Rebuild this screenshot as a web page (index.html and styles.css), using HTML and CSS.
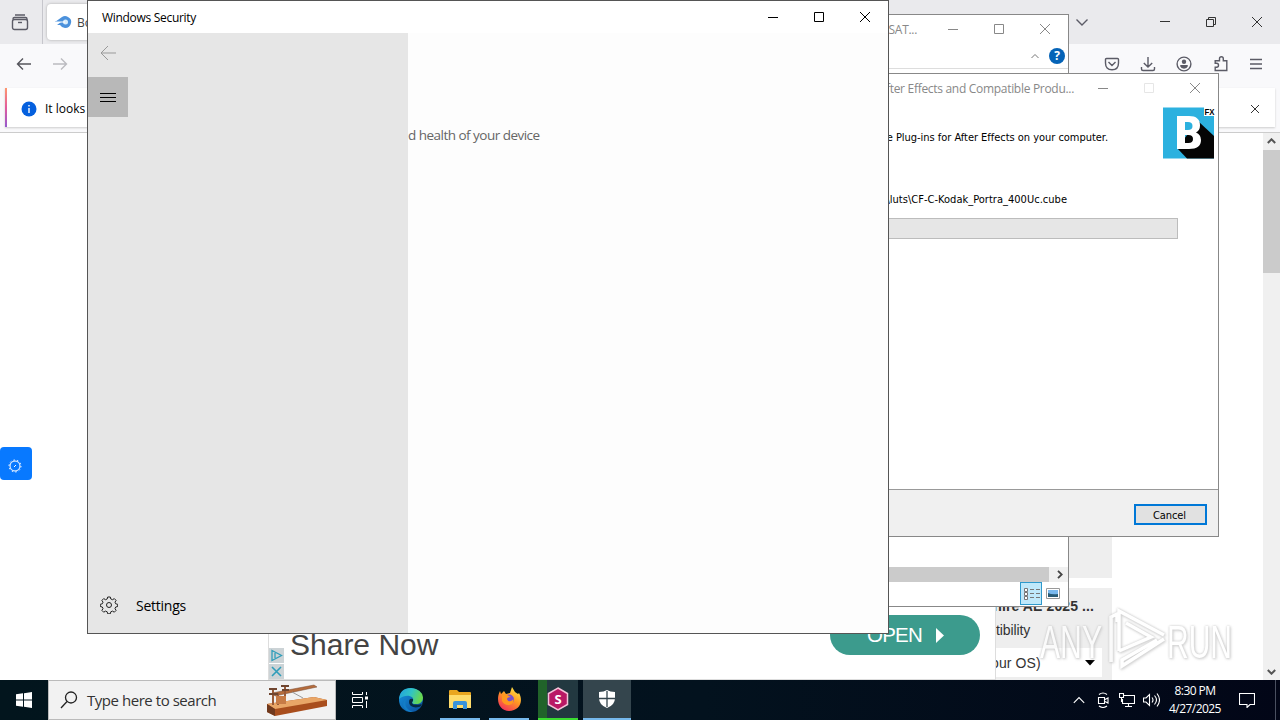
FILE: index.html
```html
<!DOCTYPE html>
<html lang="en">
<head>
<meta charset="utf-8">
<title>Desktop</title>
<link rel="stylesheet" href="styles.css">
</head>
<body>
<div class="desktop">

<section class="browser">
  <div class="tabstrip">
    <div class="tabview"><svg width="18" height="17" viewBox="0 0 18 17" class="line"><path d="M4 1h10M2 5.500V5q0-1.500 1.500-1.500h11q1.500 0 1.500 1.500V6"/><rect x="1.500" y="5.500" width="15" height="10" rx="2"/><path d="M7 8.500h4"/></svg></div>
    <div class="tab"><svg width="17" height="12" viewBox="0 0 17 12"><path d="M0 6L7 1Q10-1 13 1Q17 3 16 7Q15 12 10 12Q7 12 5 9L2 9L6 6Z" fill="#4b91dc"/><circle cx="10.500" cy="6" r="2.500" fill="#d8ecfb"/><path d="M1 6h9" stroke="#fff"/></svg><span>Boris</span></div>
    <div class="browser-controls">
      <svg width="14" height="9" viewBox="0 0 14 9" class="line"><path d="M1.500 1.500L7 7L12.500 1.500"/></svg>
      <svg width="12" height="12" viewBox="0 0 12 12" class="thin"><path d="M1 5.500h10"/></svg>
      <svg width="12" height="12" viewBox="0 0 12 12" class="thin"><path d="M1.500 3.500h7v7h-7zM3.500 3V1.500h7v7H9"/></svg>
      <svg width="12" height="12" viewBox="0 0 12 12" class="thin"><path d="M1 1l10 10M11 1L1 11"/></svg>
    </div>
  </div>
  <div class="toolbar">
    <svg width="16" height="14" viewBox="0 0 16 14" class="line dark"><path d="M15 7H1.500M7 1.500L1.500 7L7 12.500"/></svg>
    <svg width="16" height="14" viewBox="0 0 16 14" class="line faded"><path d="M1 7h13.500M9 1.500L14.500 7L9 12.500"/></svg>
    <div class="tools">
      <svg width="16" height="14" viewBox="0 0 16 14" class="line"><path d="M2.500 1.500h11q1 0 1 1V6Q14.500 12.800 8 12.800T1.500 6V2.500q0-1 1-1zM4.500 5L8 8.500L11.500 5"/></svg>
      <svg width="16" height="16" viewBox="0 0 16 16" class="line"><path d="M8 1v10M3.800 7L8 11L12.200 7M1.500 11v2q0 1.500 1.500 1.500h10q1.500 0 1.500-1.500v-2"/></svg>
      <svg width="16" height="16" viewBox="0 0 16 16" class="line"><circle cx="8" cy="8" r="6.900"/><circle cx="8" cy="5.800" r="2.200" fill="#5b5b66" stroke="none"/><path d="M4 10q0-1 1-1h6q1 0 1 1q-1.200 2.800-4 2.800T4 10z" fill="#5b5b66" stroke="none"/></svg>
      <svg width="16" height="16" viewBox="0 0 16 16" class="line"><path d="M2.200 7.300V4.800h4.300V2.800q0-2 1.900-2t1.900 2V4.800h3.500v9.700H2.200V11.200h1.400q1.900 0 1.900-1.950T3.600 7.300z" /></svg>
      <svg width="14" height="12" viewBox="0 0 14 12" class="line"><path d="M1 1.500h12M1 6h12M1 10.500h12"/></svg>
    </div>
  </div>
  <div class="notice-row">
    <div class="notice">
      <svg width="16" height="16" viewBox="0 0 16 16"><circle cx="8" cy="8" r="7.500" fill="#0560de"/><path d="M8 7v5M8 4v1.500" stroke="#fff" stroke-width="1.400"/></svg>
      <span>It looks like</span>
      <svg width="10" height="10" viewBox="0 0 10 10" class="thin notice-x"><path d="M1 1l8 8M9 1L1 9"/></svg>
    </div>
  </div>
  <div class="page">
    <div class="page-left"><div class="widget"><svg width="14" height="14" viewBox="0 0 14 14"><circle cx="7" cy="7" r="5" fill="none" stroke="#fff" stroke-width="1"/><circle cx="7" cy="7" r="6" fill="none" stroke="#fff" stroke-width="1" stroke-dasharray="1.500 2.200"/><path d="M6 8l2-2" stroke="#fff"/></svg></div></div>
    <div class="ad">
      <div class="ad-marks">
        <svg width="15" height="15" viewBox="0 0 15 15"><path d="M3 2.500v10L12.500 7.500zM6 5v5" fill="none" stroke="#2f9dba" stroke-width="1.300"/></svg>
        <svg width="15" height="15" viewBox="0 0 15 15"><path d="M3 3l9 9M12 3l-9 9" stroke="#2f9dba" stroke-width="1.600"/></svg>
      </div>
      <div class="share">Share Now</div>
      <div class="open"><span>OPEN</span><svg width="8" height="15" viewBox="0 0 8 15"><path d="M0 0L8 7.500L0 15z" fill="#fff"/></svg></div>
    </div>
    <div class="sidebar">
      <div class="side-top"></div>
      <div class="side-card"><b>hire AE 2025 ...</b><span>tibility</span><div class="select"><span>our OS)</span><svg width="10" height="6" viewBox="0 0 10 6"><path d="M0 0h10L5 5.500z"/></svg></div></div>
    </div>
    <div class="scrollbar">
      <svg width="9" height="6" viewBox="0 0 9 6"><path d="M.8 5L4.500 1.300L8.200 5"/></svg>
      <div class="thumb"></div>
      <svg width="9" height="6" viewBox="0 0 9 6"><path d="M.8 1L4.500 4.700L8.200 1"/></svg>
    </div>
  </div>
</section>

<section class="window explorer">
  <div class="titlebar"><span class="title">SAT...</span>
    <div class="controls">
      <svg width="12" height="12" viewBox="0 0 12 12"><path d="M1 6.500h10"/></svg>
      <svg width="12" height="12" viewBox="0 0 12 12"><path d="M1.500 1.500h9v9h-9z"/></svg>
      <svg width="12" height="12" viewBox="0 0 12 12"><path d="M1 1l10 10M11 1L1 11"/></svg>
    </div>
  </div>
  <div class="ribbon"><svg width="8" height="6" viewBox="0 0 8 6" fill="none" stroke="#777"><path d="M.5 5L4 1.500L7.500 5"/></svg><i>?</i></div>
  <div class="files"></div>
  <div class="hscroll"><div class="hthumb"></div><svg width="6" height="9" viewBox="0 0 6 9"><path d="M1 .8L4.700 4.500L1 8.200" fill="none" stroke="#444" stroke-width="1.800"/></svg></div>
  <div class="status">
    <div class="details"><svg width="18" height="14" viewBox="0 0 18 14" fill="none" stroke="#777"><path d="M2.500 1.500h3v3h-3zM2.500 5.500h3v3h-3zM2.500 9.500h3v3h-3z" fill="#fff"/><path d="M8 2.500h4M14 2.500h4M8 6.500h4M14 6.500h4M8 10.500h4M14 10.500h4"/></svg></div>
    <svg width="14" height="11" viewBox="0 0 14 11"><path d="M.5.5h13v10H.5z" fill="#fff" stroke="#999"/><path d="M2 2h10v7H2z" fill="#79b8ed"/><path d="M2 5q4 2 10 1v3H2z" fill="#285b76"/></svg>
  </div>
</section>

<section class="window installer">
  <div class="titlebar"><span class="title">After Effects and Compatible Produ...</span>
    <div class="controls">
      <svg width="12" height="12" viewBox="0 0 12 12"><path d="M1 6.500h10"/></svg>
      <svg width="12" height="12" viewBox="0 0 12 12" class="disabled"><path d="M1.500 1.500h9v9h-9z"/></svg>
      <svg width="12" height="12" viewBox="0 0 12 12"><path d="M1 1l10 10M11 1L1 11"/></svg>
    </div>
  </div>
  <div class="install-head">
    <p>the Plug-ins for After Effects on your computer.</p>
    <svg width="52" height="52" viewBox="0 0 52 52"><path d="M0 0.500h51v51H0z" fill="#2cb1df"/><path d="M35 14L51 29V51.500H24L14 41z" fill="#050505"/><path d="M41 0h11v9H41z" fill="#fff"/><text x="41.500" y="7.500" textLength="10" lengthAdjust="spacingAndGlyphs" class="fx">FX</text><path fill-rule="evenodd" d="M14 9h12q11 0 11 9.500q0 5-4 7q5 2 5 7.500q0 9-12 9H14zM22 15v8h3q4.500 0 4.500-4t-4.500-4zM22 28v8h3.500q4.500 0 4.500-4t-4.500-4z" fill="#fff"/></svg>
  </div>
  <div class="install-body"><p>\luts\CF-C-Kodak_Portra_400Uc.cube</p><div class="progress"></div></div>
  <div class="install-foot"><button class="cancel">Cancel</button></div>
</section>

<section class="window security">
  <div class="titlebar"><span class="title">Windows Security</span>
    <div class="controls">
      <svg width="12" height="12" viewBox="0 0 12 12"><path d="M1 6.500h10"/></svg>
      <svg width="12" height="12" viewBox="0 0 12 12"><path d="M1.500 1.500h9v9h-9z"/></svg>
      <svg width="12" height="12" viewBox="0 0 12 12"><path d="M1 1l10 10M11 1L1 11"/></svg>
    </div>
  </div>
  <div class="security-main">
    <nav>
      <div class="back"><svg width="16" height="14" viewBox="0 0 16 14" fill="none" stroke="#999"><path d="M16 7H1M8 0L1 7l7 7"/></svg></div>
      <div class="menu"><svg width="16" height="10" viewBox="0 0 16 10" stroke="#000"><path d="M0 .5h16M0 4.500h16M0 8.500h16"/></svg></div>
      <div class="settings"><svg width="18" height="18" viewBox="-9 -9 18 18" fill="none" stroke="#222"><path d="M-1.300-8h2.600l.5 2 1.800.7 1.700-1.100 1.800 1.800-1.100 1.800.7 1.600 2 .5v2.200l-2 .5-.7 1.600 1.100 1.800-1.800 1.800-1.800-1.100-1.700.7-.5 2h-2.600l-.5-2-1.700-.7-1.800 1.100-1.800-1.800 1.100-1.800-.7-1.600-2-.5v-2.200l2-.5.7-1.600-1.100-1.800 1.800-1.800 1.800 1.100 1.700-.7z"/><circle r="2.500"/></svg><span>Settings</span></div>
    </nav>
    <p>d health of your device</p>
  </div>
</section>

<svg class="watermark" width="210" height="66" viewBox="0 0 210 66">
  <text x="5" y="52" textLength="62" lengthAdjust="spacingAndGlyphs">ANY</text>
  <path d="M76 56V11L82 8V16M84 45V5L129 29M84 45L116 31L91 17M129 33L87 60V54L122 34"/>
  <text x="132" y="52" textLength="65" lengthAdjust="spacingAndGlyphs">RUN</text>
</svg>

<footer class="taskbar">
  <div class="task start"><svg width="16" height="16" viewBox="0 0 16 16"><path d="M0 2.300L7 1.300V7.500H0zM8 1.200L16 0V7.500H8zM0 8.500H7v6.200L0 13.700zM8 8.500h8V16L8 14.800z" fill="#fff"/></svg></div>
  <div class="search">
    <svg width="18" height="18" viewBox="0 0 18 18" fill="none" stroke="#222" stroke-width="1.300"><circle cx="11" cy="6.500" r="5.500"/><path d="M7 10.500L1 17"/></svg>
    <span>Type here to search</span>
    <svg class="telegraph" width="62" height="34" viewBox="0 0 62 34"><path d="M1 21L48 14l13 3v6L9 33l-8-4z" fill="#a94e1d"/><path d="M1 21L48 14l13 3L9 26z" fill="#e9a667"/><path d="M1 21l8 5v7l-8-4z" fill="#70391d"/><path d="M6 10l42-8 3 2-42 9z" fill="#b56c3c" stroke="#75462e" stroke-width=".5"/><path d="M7 7v15M12 10v12M19 3v17" stroke="#9a5a38" stroke-width="2" fill="none"/><path d="M3 6h8M15 3h8M3 11h9M16 7h7" stroke="#704630" stroke-width="2"/><path d="M10 13h10v8H10z" fill="#c77b46"/><path d="M26 9l11 6" stroke="#999"/></svg>
  </div>
  <div class="task view"><svg width="18" height="16" viewBox="0 0 18 16" fill="none" stroke="#fff"><path d="M1.500 0v2.500h10V0M1.500 5.500h10v5h-10zM1.500 16v-2.500h10V16M15.500 0v3M15.500 9v7"/><path d="M14 4.500h3v3h-3z" fill="#fff" stroke="none"/></svg></div>
  <div class="task edge"><svg width="24" height="24" viewBox="0 0 24 24"><defs><linearGradient id="eg" x2="1" y2=".3"><stop stop-color="#209fe0"/><stop offset=".55" stop-color="#31c4c4"/><stop offset="1" stop-color="#68d850"/></linearGradient><linearGradient id="eb" x2="1" y2="1"><stop stop-color="#1695df"/><stop offset="1" stop-color="#0a4c9a"/></linearGradient></defs><circle cx="12" cy="12" r="12" fill="url(#eb)"/><path d="M0 11Q1 0 12 0q11 1 12 9.500c0 5-4 7-8 6.500-3 0-3-2-2-3 2-5-7-8-14-2z" fill="url(#eg)"/><path d="M8 11c-4 5 0 12 7 13-6 1-11-3-11-8 0-3 2-5 4-5z" fill="#137dc6"/><path d="M14 11q-4-1-4 3c0 5 7 7 12 4l2-4v3l-1-1q-3 1-7 .5c-3 0-4-2-2-3.500z" fill="#062b44"/></svg></div>
  <div class="task files-icon active"><svg width="22" height="19" viewBox="0 0 22 19"><path d="M0 1q0-1 1-1h7l2 2h11q1 0 1 1v14H0z" fill="#e9a620"/><path d="M0 5h22v13H0z" fill="#ffdc6b"/><path d="M4 19v-6q0-2 2-2h10q2 0 2 2v6h-4v-4H8v4z" fill="#3993db"/></svg></div>
  <div class="task firefox active"><svg width="24" height="24" viewBox="0 0 24 24"><defs><linearGradient id="ff" x1=".8" y1="0" x2=".2" y2="1"><stop stop-color="#ffe84a"/><stop offset=".45" stop-color="#ff9923"/><stop offset="1" stop-color="#f32b5d"/></linearGradient></defs><path d="M3 4l1 3 3-3 2 3 4-1 2-6 3 5 3 2 1-1c5 9 0 18-10 18C3 24-2 14 3 4z" fill="url(#ff)"/><circle cx="12" cy="12.500" r="5" fill="#7650cf"/><path d="M5 8c4-2 6 1 9 2-2 0-4 1-4 2 1 4 6 2 6 0 3 6-8 9-11 2z" fill="#ff981f"/></svg></div>
  <div class="task setup"><svg width="22" height="24" viewBox="0 0 22 24"><path d="M11 1l9.500 5.500v11L11 23l-9.500-5.500v-11z" fill="#b91865" stroke="#f5c2d8" stroke-width="1.500"/><text x="11" y="16.500" text-anchor="middle" class="s-mark">S</text></svg></div>
  <div class="task shield active"><svg width="18" height="18" viewBox="0 0 18 18"><path d="M9 0q3 2 8 2v6q0 7-8 10Q1 15 1 8V2q5 0 8-2z" fill="#fff"/><path d="M9 1v16M1 8.500h16" stroke="#34454d" stroke-width="1.300"/></svg></div>
  <div class="tray">
    <svg width="12" height="8" viewBox="0 0 12 8"><path d="M.8 6.800L6 1.500l5.200 5.300"/></svg>
    <svg width="12" height="16" viewBox="0 0 12 16"><path d="M1.500 5.500h6v6h-6zM8 7.500l3-1.500v5l-3-1.500M2 2.500q4-3 8 0M2 14q4 3 8 0"/></svg>
    <svg width="16" height="14" viewBox="0 0 16 14"><path d="M4.500 2.500h11v8H3.500V6M9.500 11v2.500M6 13.500h7M.5.500h4v4h-4zM2.500 5v4"/></svg>
    <svg width="17" height="14" viewBox="0 0 17 14"><path d="M.5 5h2.500l3.500-3.500v11L3 9H.5zM9 4.500q2 2.500 0 5M11.500 2.500q4 4.500 0 9M14 .5q5 6.500 0 13"/></svg>
    <div class="clock"><span>8:30 PM</span><span>4/27/2025</span></div>
    <svg width="16" height="16" viewBox="0 0 16 16"><path d="M.5 1.500h15v11H11L8 15.500V12.500H.5z"/></svg>
    <div class="show-desktop"></div>
  </div>
</footer>
</div>
</body>
</html>
```
FILE: styles.css
```css
* { box-sizing: border-box; }
body { margin: 0; overflow: hidden; font: 12px "Open Sans", "Noto Sans", sans-serif; }
p { margin: 0; }
svg { display: block; flex: none; }
.desktop { position: relative; width: 1280px; height: 720px; overflow: hidden; }
.line { fill: none; stroke: #5b5b66; stroke-width: 1.4; }
.line.dark { stroke: #55555c; }
.line.faded { stroke: #bbbbc0; }
.thin { fill: none; stroke: #333; stroke-width: 1; }
.browser { height: 680px; display: flex; flex-direction: column; background: #fff; }
.tabstrip { display: flex; height: 44px; background: #eaeaed; }
.tabview { width: 43px; border-right: 1px solid #c6c6cc; padding: 14px 11px; }
.tab { display: flex; align-items: center; gap: 5px; width: 240px; height: 36px; margin: 4px 0 0 4px; padding: 0 8px; border-radius: 4px; background: #fff; box-shadow: 0 0 3px #aaa; color: #444; }
.browser-controls { display: flex; align-items: center; margin-left: auto; padding-right: 17px; }
.browser-controls svg + svg { margin-left: 34px; }
.browser-controls svg:nth-child(2) { margin-left: 70px; }
.toolbar { display: flex; align-items: center; height: 44px; gap: 20px; padding: 0 17px 4px 16px; background: #f9f9fb; }
.tools { display: flex; align-items: center; gap: 20px; margin-left: auto; }
.tools svg:nth-child(-n+3) { margin-left: -1px; margin-right: 1px; }
.notice-row { height: 45px; padding: 0 5px 5px; background: #f9f9fb; border-bottom: 1px solid #ccc; }
.notice { height: 39px; display: flex; align-items: center; gap: 8px; padding: 2px 15px 0 14px; background: #fff; border-left: 2px solid; border-image: linear-gradient(#ff9a6c, #e25b9d, #9059d0) 1; box-shadow: 0 1px 2px #ccc; }
.notice-x { margin-left: auto; }
.page { display: flex; flex: 1; }
.page-left { width: 268px; padding-top: 314px; }
.widget { width: 32px; height: 33px; padding: 12px 8px; border-radius: 4px; background: #0879ff; }
.ad { width: 728px; display: flex; align-items: flex-end; border: solid #ddd; border-width: 0 1px 1px; }
.ad-marks { display: grid; gap: 1px; }
.ad-marks svg { background: #ccd3d6; }
.share { margin-left: 6px; padding-bottom: 17px; font: 30px/34px "Liberation Sans", sans-serif; color: #444; width: 540px; }
.open { display: flex; align-items: center; width: 150px; height: 40px; margin-bottom: 24px; padding-left: 37px; gap: 13px; border-radius: 20px; background: #3c9b8d; color: #fff; font: 20.5px "Liberation Sans", sans-serif; }
.open span { width: 56px; white-space: nowrap; letter-spacing: -.8px; }
.sidebar { width: 116px; display: flex; flex-direction: column; overflow: hidden; }
.side-top { height: 445px; background: #eee; }
.side-card { flex: 1; margin-top: 10px; display: flex; flex-direction: column; padding: 9px 10px 3px 0; background: #eee; font: 14px/19px "Liberation Sans", sans-serif; color: #333; align-items: flex-end; }
.side-card b { white-space: nowrap; margin-right: 8px; letter-spacing: .1px; }
.side-card > span { align-self: flex-start; margin: 5px 0 8px 0; letter-spacing: -.1px; }
.select { flex: 1; width: 107px; display: flex; align-items: center; justify-content: space-between; background: #fff; padding: 1px 7px 0 0; }
.select span { margin-left: -4px; white-space: nowrap; letter-spacing: .1px; }
.scrollbar { width: 17px; margin-left: auto; background: #f0f0f0; display: flex; flex-direction: column; align-items: center; padding: 5px 0; }
.scrollbar svg { fill: none; stroke: #555; stroke-width: 2; }
.thumb { width: 17px; height: 123px; margin: 6px 0 auto; background: #cbcbcb; }
.window { position: absolute; display: flex; flex-direction: column; background: #fff; border: 1px solid #888; }
.titlebar { display: flex; align-items: center; height: 30px; flex: none; white-space: nowrap; }
.title { font-size: 12px; letter-spacing: -.3px; }
.controls { display: flex; gap: 34px; margin-left: auto; padding-right: 17px; fill: none; stroke: #000; }
.explorer { left: 600px; top: 14px; width: 469px; height: 593px; color: #888; }
.explorer .titlebar, .installer .titlebar { padding-bottom: 2px; }
.explorer .title, .installer .title { flex: 1; text-align: right; margin-right: 30px; }
.installer .title { margin-right: 23px; }
.explorer .controls, .installer .controls { stroke: #888; }
.ribbon { display: flex; align-items: center; justify-content: flex-end; gap: 10px; height: 24px; padding: 0 3px 2px 0; border-bottom: 1px solid #ddd; }
.ribbon i { width: 16px; height: 16px; border-radius: 50%; background: #0563b7; color: #fff; font: bold 12px/16px "Open Sans", sans-serif; text-align: center; }
.files { flex: 1; }
.hscroll { display: flex; align-items: center; height: 15px; background: #f0f0f0; }
.hthumb { width: 448px; height: 15px; margin-right: 8px; background: #cbcbcb; }
.status { display: flex; height: 24px; align-items: center; justify-content: flex-end; gap: 4px; padding: 0 8px 2px 0; }
.details { width: 22px; height: 23px; padding: 4px 2px; border: 1px solid #2e99cc; background: #bfe8fa; margin-top: 1px; }
.details svg { margin-left: -1px; }
.installer { left: 700px; top: 73px; width: 519px; height: 464px; color: #888; }
.installer .disabled { opacity: .2; }
.install-head { display: flex; justify-content: space-between; height: 56px; padding: 3px 3px 0 0; color: #000; }
.install-head p { width: 407px; text-align: right; margin-top: 24px; }
.installer p { font: 11px/14px "DejaVu Sans Condensed", "DejaVu Sans", sans-serif; font-stretch: condensed; letter-spacing: -.03px; white-space: nowrap; }
.fx { font: bold 9px "Liberation Sans", sans-serif; }
.install-body { flex: 1; color: #000; padding-top: 33px; }
.install-body p { width: 366px; text-align: right; letter-spacing: .02px; }
.progress { width: 477px; height: 21px; margin-top: 11px; background: #e6e6e6; border: 1px solid #bcbcbc; }
.install-foot { height: 47px; padding: 14px 11px; background: #f0f0f0; border-top: 1px solid #999; display: flex; justify-content: flex-end; }
.cancel { width: 73px; height: 21px; padding: 2px 2px 0 0; border: 2px solid #0078d7; background: #e1e1e1; font: 11px/14px "DejaVu Sans Condensed", "DejaVu Sans", sans-serif; letter-spacing: -.1px; }
.security { left: 87px; top: 0; width: 802px; height: 634px; border-color: #555; background: #fdfdfd; }
.security .titlebar { height: 32px; background: #fff; padding-left: 14px; }
.security-main { display: flex; flex: 1; }
nav { display: flex; flex-direction: column; width: 320px; background: #e6e6e6; }
.back { height: 44px; padding: 13px 12px; }
.menu { width: 40px; height: 40px; padding: 16px 12px; background: #b8b8b8; }
.settings { display: flex; align-items: center; height: 42px; margin-top: auto; margin-bottom: 7px; gap: 18px; padding-left: 12px; font-size: 14px; letter-spacing: -.25px; }
.security-main p { margin-top: 92px; font-size: 13.5px; line-height: 20px; letter-spacing: -.52px; color: #666; }
.watermark { position: absolute; left: 1035px; top: 606px; fill: #fff; filter: drop-shadow(0 0 1px #bbb) drop-shadow(1px 1px 1px #ccc); opacity: .75; }
.watermark text { font: 46px "Liberation Sans", sans-serif; }
.watermark path { fill: none; stroke: #fff; stroke-width: 3.5; }
.taskbar { display: flex; height: 40px; background: linear-gradient(90deg, #02151d, #03121e 55%, #020617); }
.task { display: flex; align-items: center; justify-content: center; height: 40px; }
.start { width: 48px; }
.search { display: flex; align-items: center; width: 288px; background: #f2f2f2; border: 1px solid #bbb; padding: 0 7px 0 11px; color: #333; font-size: 15px; }
.search span { margin-left: 9px; white-space: nowrap; letter-spacing: -.46px; }
.telegraph { margin-left: auto; }
.view { width: 48px; }
.edge { width: 54px; }
.files-icon { width: 40px; margin: 0 9px 0 2px; }
.firefox { width: 40px; margin-right: 9px; }
.active { border-bottom: 2px solid #76b9ed; }
.setup { width: 40px; background: linear-gradient(90deg, #21632a 9px, #223840 9px); border-bottom: 2px solid #3bdc31; }
.s-mark { fill: #fff; font: bold 13px "Open Sans", sans-serif; }
.shield { width: 48px; margin-left: 5px; background: #34454d; }
.tray { display: flex; align-items: center; margin-left: auto; color: #fff; }
.tray svg { fill: none; stroke: #fff; stroke-width: 1.1; }
.tray > svg + svg { margin-left: 12px; }
.tray > svg:nth-child(3) { margin-left: 10px; }
.tray > svg:nth-child(4) { margin-left: 8px; }
.clock { display: flex; flex-direction: column; width: 54px; margin: 0 17px 0 8px; text-align: center; line-height: 18px; font-size: 12px; letter-spacing: -.55px; white-space: nowrap; align-items: center; }
.show-desktop { width: 5px; height: 40px; margin-left: 20px; border-left: 1px solid #4a5060; }
```
